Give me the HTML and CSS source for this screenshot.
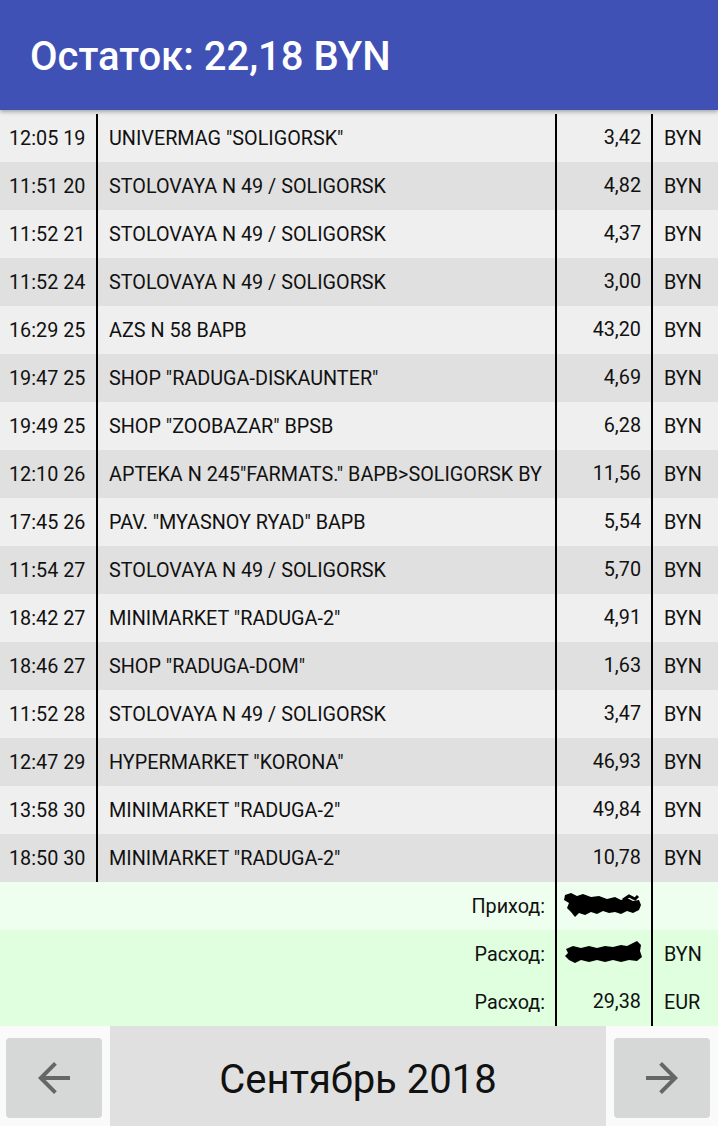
FILE: index.html
```html
<!DOCTYPE html>
<html lang="ru">
<head>
<meta charset="utf-8">
<link rel="stylesheet" href="styles.css">
</head>
<body>
<div class="app">
  <header class="bar"><h1 class="title">Остаток: 22,18 BYN</h1></header>
  <div class="list">
    <div class="row odd first"><div class="c-date">12:05 19</div><div class="c-name">UNIVERMAG "SOLIGORSK"</div><div class="c-sum">3,42</div><div class="c-cur">BYN</div></div>
    <div class="row even"><div class="c-date">11:51 20</div><div class="c-name">STOLOVAYA N 49 / SOLIGORSK</div><div class="c-sum">4,82</div><div class="c-cur">BYN</div></div>
    <div class="row odd"><div class="c-date">11:52 21</div><div class="c-name">STOLOVAYA N 49 / SOLIGORSK</div><div class="c-sum">4,37</div><div class="c-cur">BYN</div></div>
    <div class="row even"><div class="c-date">11:52 24</div><div class="c-name">STOLOVAYA N 49 / SOLIGORSK</div><div class="c-sum">3,00</div><div class="c-cur">BYN</div></div>
    <div class="row odd"><div class="c-date">16:29 25</div><div class="c-name">AZS N 58 BAPB</div><div class="c-sum">43,20</div><div class="c-cur">BYN</div></div>
    <div class="row even"><div class="c-date">19:47 25</div><div class="c-name">SHOP "RADUGA-DISKAUNTER"</div><div class="c-sum">4,69</div><div class="c-cur">BYN</div></div>
    <div class="row odd"><div class="c-date">19:49 25</div><div class="c-name">SHOP "ZOOBAZAR" BPSB</div><div class="c-sum">6,28</div><div class="c-cur">BYN</div></div>
    <div class="row even"><div class="c-date">12:10 26</div><div class="c-name">APTEKA N 245"FARMATS." BAPB&gt;SOLIGORSK BY</div><div class="c-sum">11,56</div><div class="c-cur">BYN</div></div>
    <div class="row odd"><div class="c-date">17:45 26</div><div class="c-name">PAV. "MYASNOY RYAD" BAPB</div><div class="c-sum">5,54</div><div class="c-cur">BYN</div></div>
    <div class="row even"><div class="c-date">11:54 27</div><div class="c-name">STOLOVAYA N 49 / SOLIGORSK</div><div class="c-sum">5,70</div><div class="c-cur">BYN</div></div>
    <div class="row odd"><div class="c-date">18:42 27</div><div class="c-name">MINIMARKET "RADUGA-2"</div><div class="c-sum">4,91</div><div class="c-cur">BYN</div></div>
    <div class="row even"><div class="c-date">18:46 27</div><div class="c-name">SHOP "RADUGA-DOM"</div><div class="c-sum">1,63</div><div class="c-cur">BYN</div></div>
    <div class="row odd"><div class="c-date">11:52 28</div><div class="c-name">STOLOVAYA N 49 / SOLIGORSK</div><div class="c-sum">3,47</div><div class="c-cur">BYN</div></div>
    <div class="row even"><div class="c-date">12:47 29</div><div class="c-name">HYPERMARKET "KORONA"</div><div class="c-sum">46,93</div><div class="c-cur">BYN</div></div>
    <div class="row odd"><div class="c-date">13:58 30</div><div class="c-name">MINIMARKET "RADUGA-2"</div><div class="c-sum">49,84</div><div class="c-cur">BYN</div></div>
    <div class="row even"><div class="c-date">18:50 30</div><div class="c-name">MINIMARKET "RADUGA-2"</div><div class="c-sum">10,78</div><div class="c-cur">BYN</div></div>
    <div class="row total income"><div class="c-label">Приход:</div><div class="c-sum">
      <svg class="blot" width="80" height="30" viewBox="0 0 80 30"><path d="M2 4 L8 2 L14 5 L20 3 L28 6 L36 5 L44 8 L52 6 L58 9 L64 7 L70 10 L76 9 L78 14 L76 19 L70 22 L64 20 L58 23 L52 21 L46 22 L40 20 L34 23 L28 21 L22 24 L16 22 L12 26 L8 21 L4 17 L6 12 L1 9 Z" fill="#000"/><path d="M60 9 L66 5 L72 8 L75 5" stroke="#000" stroke-width="3" fill="none"/></svg>
    </div><div class="c-cur"></div></div>
    <div class="row total"><div class="c-label">Расход:</div><div class="c-sum">
      <svg class="blot" width="80" height="30" viewBox="0 0 80 30"><path d="M3 10 L10 7 L18 9 L26 7 L34 9 L42 7 L50 8 L58 6 L64 7 L70 4 L74 2 L78 6 L77 12 L79 18 L74 22 L66 21 L58 23 L50 21 L42 23 L34 21 L26 23 L18 21 L12 24 L6 21 L2 17 L5 14 Z" fill="#000"/></svg>
    </div><div class="c-cur">BYN</div></div>
    <div class="row total"><div class="c-label">Расход:</div><div class="c-sum">29,38</div><div class="c-cur">EUR</div></div>
  </div>
  <footer class="nav">
    <button class="nav-btn" aria-label="Назад">
      <svg width="48" height="48" viewBox="0 0 24 24"><path d="M20 11H7.83l5.59-5.59L12 4l-8 8 8 8 1.41-1.41L7.83 13H20v-2z" fill="#666"/></svg>
    </button>
    <div class="month">Сентябрь 2018</div>
    <button class="nav-btn" aria-label="Вперёд">
      <svg width="48" height="48" viewBox="0 0 24 24"><path d="M12 4l-1.41 1.41L16.17 11H4v2h12.17l-5.58 5.59L12 20l8-8z" fill="#666"/></svg>
    </button>
  </footer>
</div>
</body>
</html>
```
FILE: styles.css
```css
html, body {
  margin: 0;
  padding: 0;
}
body {
  font-family: Roboto, "Noto Sans", sans-serif;
  color: #111;
  background: #fafafa;
}
.app {
  width: 718px;
  height: 1126px;
  display: flex;
  flex-direction: column;
  overflow: hidden;
}
.bar {
  height: 110px;
  background: #3f51b5;
  display: flex;
  align-items: center;
  padding-left: 30px;
  box-sizing: border-box;
  position: relative;
  z-index: 2;
  box-shadow: 0 2px 4px rgba(0,0,0,0.3);
  flex: none;
}
.title {
  margin: 0;
  color: #fff;
  font-size: 40px;
  font-weight: 500;
  padding-top: 2px;
}
.list {
  display: flex;
  flex-direction: column;
  flex: none;
}
.row {
  display: flex;
  height: 48px;
  font-size: 19.8px;
  line-height: 50px;
}
.row.first {
  height: 52px;
  padding-top: 4px;
  box-sizing: border-box;
}
.odd { background: #efefef; }
.even { background: #e0e0e0; }
.income { background: #efffef; }
.total:not(.income) { background: #dfffdf; }
.c-date {
  width: 98px;
  flex: none;
  box-sizing: border-box;
  padding-left: 9px;
  border-right: 2px solid #000;
  white-space: nowrap;
  height: 48px;
}
.c-name {
  width: 457px;
  flex: none;
  box-sizing: border-box;
  padding-left: 11px;
  white-space: nowrap;
  overflow: hidden;
  height: 48px;
}
.c-label {
  width: 555px;
  flex: none;
  box-sizing: border-box;
  text-align: right;
  padding-right: 10px;
  height: 48px;
}
.c-sum {
  width: 98px;
  flex: none;
  box-sizing: border-box;
  border-left: 2px solid #000;
  border-right: 2px solid #000;
  padding-right: 10px;
  display: flex;
  justify-content: flex-end;
  align-items: center;
  height: 48px;
}
.c-cur {
  flex: 1;
  padding-left: 11px;
  height: 48px;
}
.blot {
  display: block;
  margin-right: -2px;
}
.nav {
  height: 100px;
  flex: none;
  display: flex;
  gap: 8px;
  padding: 0 8px 0 6px;
  background: #fafafa;
}
.nav-btn {
  width: 96px;
  height: 80px;
  margin: 12px 0 8px;
  border: none;
  border-radius: 4px;
  background: #d6d7d7;
  display: flex;
  align-items: center;
  justify-content: center;
  padding: 0;
}
.month {
  flex: 1;
  background: #e0e0e0;
  display: flex;
  align-items: center;
  justify-content: center;
  font-size: 40px;
  color: #111;
  padding-top: 6px;
}
```
